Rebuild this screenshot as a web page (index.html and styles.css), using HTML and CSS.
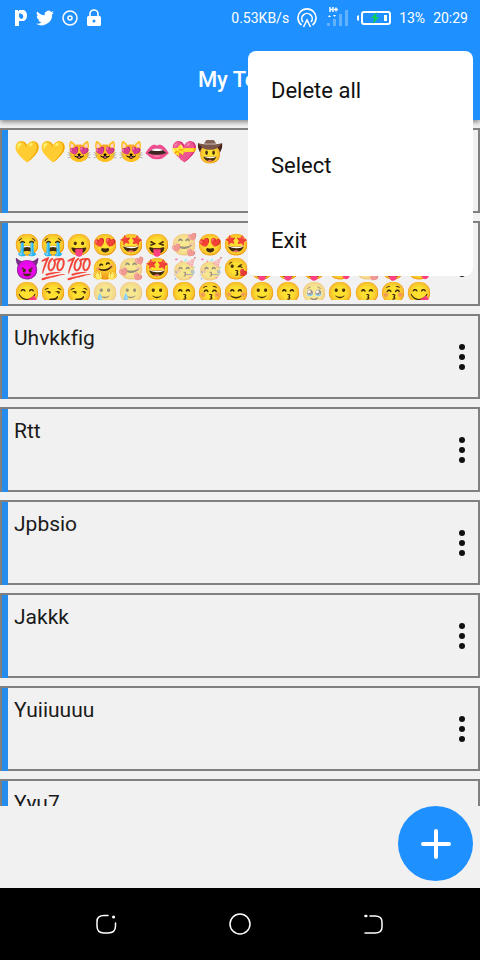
FILE: index.html
```html
<!DOCTYPE html>
<html lang="en">
<head>
<meta charset="utf-8">
<meta name="viewport" content="width=device-width, initial-scale=1">
<title>My Todo</title>
<link rel="stylesheet" href="styles.css">
</head>
<body>
<div class="app">
  <div class="top">
    <div class="status">
      <div class="status-left">
        <svg width="14" height="18" viewBox="0 0 14 18"><path fill="#fff" fill-rule="evenodd" d="M1 1h3v1h1V1h5c2 1 3 3 3 5.500s-1 4.500-3 5.500H5v5H1zM5 5v3l2 2c3 0 3-5 0-5L6 4z"/></svg>
        <svg width="18" height="18" viewBox="0 1 24 22"><path fill="#fff" d="M23.900 4.600a10 10 0 0 1-2.800.8 5 5 0 0 0 2.200-2.700c-1 .5-2 1-3.200 1.200a4.900 4.900 0 0 0-8.400 4.500A14 14 0 0 1 1.700 3.200a4.900 4.900 0 0 0 1.500 6.500 5 5 0 0 1-2.200-.6v.1a4.900 4.900 0 0 0 4 4.800 5 5 0 0 1-2.300.1 4.900 4.900 0 0 0 4.600 3.400A9.900 9.900 0 0 1 0 19.500 14 14 0 0 0 21.500 7c1-.7 1.800-1.500 2.400-2.400z"/></svg>
        <svg width="16" height="18" viewBox="0 0 16 18" fill="none" stroke="#fff"><circle cx="8" cy="9" r="7" stroke-width="1.500"/><circle cx="8" cy="9" r="2" stroke-width="1.500"/></svg>
        <svg width="16" height="18" viewBox="0 0 16 18"><path fill="none" stroke="#fff" stroke-width="1.600" d="M4 8V5a4 4 0 0 1 8 0v3"/><path fill="#fff" fill-rule="evenodd" d="M2.500 7h11q1.500 0 1.500 1.500v7q0 1.500-1.500 1.500h-11q-1.500 0-1.500-1.500v-7Q1 7 2.500 7zM8 10.500a1.500 1.500 0 1 0 0 3 1.500 1.500 0 0 0 0-3z"/></svg>
      </div>
      <div class="status-right">
        <span>0.53KB/s</span>
        <svg width="20" height="20" viewBox="0 0 20 20" fill="none" stroke="#fff" stroke-width="1.600"><path d="M4.500 17a9 9 0 1 1 11 0M6 14a5.200 5.200 0 1 1 8 0M6.500 19l3.500-7 3.500 7"/></svg>
        <svg class="signal" width="24" height="22" viewBox="0 0 24 22"><path fill="none" stroke="#fff" stroke-width="1.400" d="M5 2v5M8 2v5M5 4.500h3M9 4.500h4M11 2.500v4"/><path fill="#fff" d="M3 12h3l-1.500-2zM8 10h3l-1.500 2z"/><path fill="#fff" opacity=".3" d="M2 18h3v3H2zM8 14h3v7H8zM14 9h3v12h-3zM20 5h3v16h-3z"/></svg>
        <svg width="34" height="16" viewBox="0 0 34 16"><rect x="5" y="2" width="28" height="12" rx="2" fill="none" stroke="#fff" stroke-width="2"/><path fill="#fff" d="M0 6l2-1v6l-2-1zM27 5h3v6h-3z"/><path fill="#0bd05b" d="M20 2l-6 6h3l-1 6 6-7h-3z"/></svg>
        <span>13%</span>
        <span>20:29</span>
      </div>
    </div>
    <header class="header"><h1>My Todo</h1></header>
    <div class="menu" role="menu">
      <button role="menuitem">Delete all</button>
      <button role="menuitem">Select</button>
      <button role="menuitem">Exit</button>
    </div>
  </div>
  <main class="main">
    <ul class="list">
      <li class="card"><p>💛💛😻😻😻👄💝🤠</p><button class="more" aria-label="Options"><i></i><i></i><i></i></button></li>
      <li class="card"><p>😭😭😛😍🤩😝<span class="dim">🥰</span>😍🤩😛😍🤩😝😍🤩😛😈💯💯🤗<span class="dim">🥰</span>🤩<span class="dim">🥳🥳</span>😘😛😛😛😋<span class="dim">🥰</span>😛😋😋😏😏<span class="dim">🥲🥲</span>🙂😙😚😊🙂😙<span class="dim">🥹</span>🙂😙😚😋</p><button class="more" aria-label="Options"><i></i><i></i><i></i></button></li>
      <li class="card"><p>Uhvkkfig</p><button class="more" aria-label="Options"><i></i><i></i><i></i></button></li>
      <li class="card"><p>Rtt</p><button class="more" aria-label="Options"><i></i><i></i><i></i></button></li>
      <li class="card"><p>Jpbsio</p><button class="more" aria-label="Options"><i></i><i></i><i></i></button></li>
      <li class="card"><p>Jakkk</p><button class="more" aria-label="Options"><i></i><i></i><i></i></button></li>
      <li class="card"><p>Yuiiuuuu</p><button class="more" aria-label="Options"><i></i><i></i><i></i></button></li>
      <li class="card"><p>Yyu7</p><button class="more" aria-label="Options"><i></i><i></i><i></i></button></li>
    </ul>
  </main>
  <div class="actions">
    <button class="add" aria-label="Add"><svg width="32" height="32" viewBox="0 0 32 32"><path d="M16 3v26M3 16h26" stroke="#fff" stroke-width="4" stroke-linecap="round"/></svg></button>
  </div>
  <nav class="nav">
    <button aria-label="Recent apps"><svg width="24" height="24" viewBox="0 0 24 24" fill="none" stroke="#fff" stroke-width="1.500" stroke-linecap="round"><path d="M14 3.500H10Q3 3.500 3 9.500v4.500q0 7 7 7h4q7.500 0 7.500-7v-3"/><path d="M19.500 5h.1" stroke-width="3"/></svg></button>
    <button aria-label="Home"><svg width="24" height="24" viewBox="0 0 24 24" fill="none" stroke="#fff" stroke-width="1.500"><circle cx="12" cy="12" r="10"/></svg></button>
    <button aria-label="Back"><svg width="24" height="24" viewBox="0 0 24 24" fill="none" stroke="#fff" stroke-width="1.500" stroke-linecap="round"><path d="M8 4h5q7 0 7 6v5q0 6-7 6H3"/><path d="M3.500 4h.8" stroke-width="2.500"/></svg></button>
  </nav>
</div>
</body>
</html>
```
FILE: styles.css
```css
* { box-sizing: border-box; }
body { margin: 0; font-family: Roboto, "Noto Color Emoji", sans-serif; font-variant-ligatures: none; color: #1b1b1b; background: #f1f1f1; }
button { border: 0; padding: 0; background: none; font: inherit; color: inherit; }
svg { display: block; }
.app { height: 100vh; display: flex; flex-direction: column; }
.top { position: relative; z-index: 1; height: 120px; flex: none; background: #1e90ff; color: #fff; box-shadow: 0 2px 5px rgba(0, 0, 0, .45); }
.status { height: 36px; padding: 0 12px 0 14px; display: flex; justify-content: space-between; font-size: 14px; }
.status-left, .status-right { display: flex; align-items: center; gap: 8px; }
.status-left { gap: 8px; }
.signal { align-self: flex-start; margin-top: 5px; }
.header { height: 84px; padding-top: 4px; display: flex; justify-content: center; align-items: center; }
.header h1 { margin: 0; font-size: 22px; line-height: 26px; font-weight: 500; }
.menu { position: absolute; top: 51px; right: 7px; width: 225px; border-radius: 8px; background: #fff; color: #111; display: flex; flex-direction: column; }
.menu button { height: 75px; padding: 4px 23px 0; text-align: left; font-size: 22px; }
.main { flex: 1; min-height: 0; overflow: hidden; }
.list { list-style: none; margin: 0; padding: 8px 0 0; display: flex; flex-direction: column; gap: 8px; }
.card { height: 85px; border: 2px solid #808080; position: relative; display: flex; padding: 10px 7px 4px 12px; justify-content: space-between; align-items: flex-start; }
.card::before { content: ""; position: absolute; left: 0; top: 0; bottom: -2px; width: 6px; background: #258cec; }
.card p { margin: 0; align-self: stretch; width: 420px; overflow: hidden; font-size: 21px; line-height: 24px; overflow-wrap: anywhere; }
.dim { opacity: .5; }
.more { width: 18px; height: 62px; flex: none; display: flex; flex-direction: column; align-items: center; justify-content: center; gap: 4px; }
.more i { width: 6px; height: 6px; border-radius: 50%; background: #111; }
.actions { height: 82px; flex: none; padding-right: 7px; display: flex; justify-content: flex-end; align-items: flex-start; }
.add { width: 75px; height: 75px; border-radius: 50%; background: #1e90ff; display: grid; place-items: center; }
.nav { height: 72px; flex: none; background: #000; display: flex; justify-content: center; gap: 110px; align-items: center; }
```
